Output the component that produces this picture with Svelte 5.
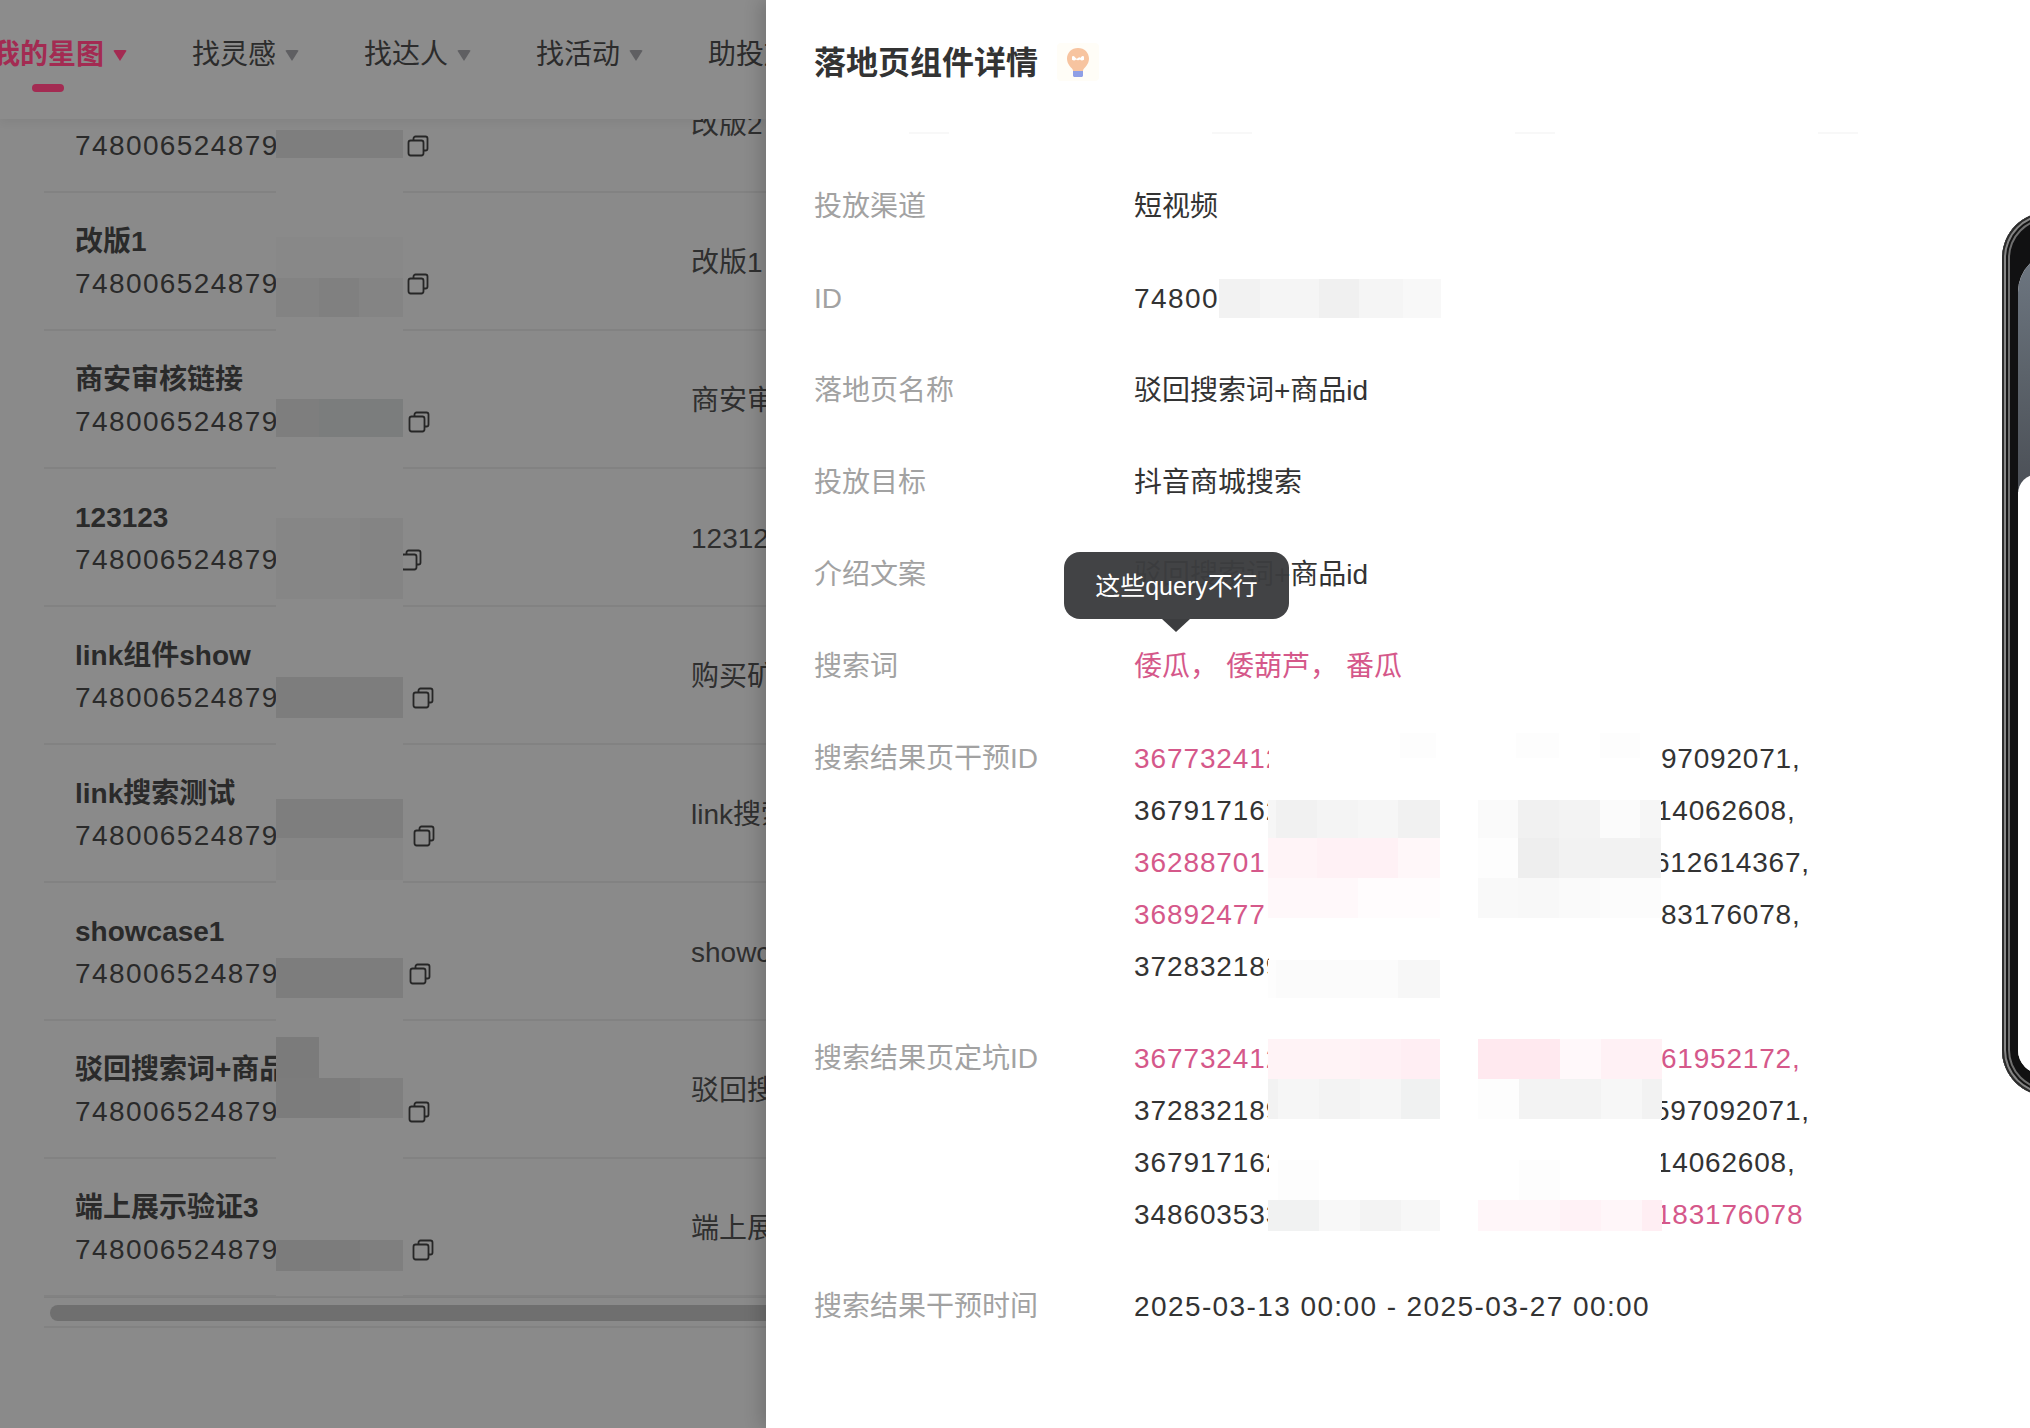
<script>
  const navItems = [
    { label: '我的星图', active: true },
    { label: '找灵感' },
    { label: '找达人' },
    { label: '找活动' },
    { label: '助投放' }
  ];

  // iconGap: the blurred part of the id has a different length on each row
  const rows = [
    { title: '改版2', note: '改版2', iconGap: 128 },
    { title: '改版1', note: '改版1', iconGap: 128 },
    { title: '商安审核链接', note: '商安审核链接', iconGap: 129 },
    { title: '123123', note: '123123', iconGap: 121 },
    { title: 'link组件show', note: '购买矿泉水', iconGap: 133 },
    { title: 'link搜索测试', note: 'link搜索测试', iconGap: 134 },
    { title: 'showcase1', note: 'showcase1', iconGap: 130 },
    { title: '驳回搜索词+商品id', note: '驳回搜索词', iconGap: 129 },
    { title: '端上展示验证3', note: '端上展示', iconGap: 133 }
  ];

  // x, y, w, h, colour
  const listBlur = [
    [276, 130, 127, 28, '#7e7e7e'],
    [276, 237, 127, 41, '#888888'],
    [276, 278, 43, 39, '#838383'],
    [319, 278, 40, 39, '#808080'],
    [359, 278, 44, 39, '#848484'],
    [276, 399, 43, 38, '#7e7e7e'],
    [319, 399, 84, 38, '#7b7d7d'],
    [276, 518, 84, 81, '#868686'],
    [360, 518, 43, 81, '#848484'],
    [276, 677, 127, 41, '#7d7d7d'],
    [276, 799, 127, 39, '#7e7e7e'],
    [276, 838, 127, 42, '#868686'],
    [276, 958, 127, 40, '#7d7d7d'],
    [276, 1037, 43, 41, '#7b7b7b'],
    [276, 1078, 84, 40, '#7c7c7c'],
    [360, 1078, 43, 40, '#7f7f7f'],
    [276, 1240, 84, 31, '#7c7c7c'],
    [360, 1240, 43, 31, '#7f7f7f']
  ];

  const detailBlur = [
    [1219, 279, 41, 39, '#f2f2f2'],
    [1260, 279, 59, 39, '#f5f5f5'],
    [1319, 279, 40, 39, '#f0f0f0'],
    [1359, 279, 44, 39, '#f5f5f5'],
    [1403, 279, 38, 39, '#f8f8f8'],

    [1400, 733, 36, 25, '#fdfdfd'],
    [1516, 733, 43, 25, '#fdfdfd'],
    [1600, 733, 40, 25, '#fdfdfd'],

    [1268, 800, 8, 38, '#f6f6f6'],
    [1276, 800, 41, 38, '#f1f1f1'],
    [1317, 800, 41, 38, '#f4f4f4'],
    [1358, 800, 40, 38, '#f6f6f6'],
    [1398, 800, 42, 38, '#f1f1f1'],
    [1478, 800, 40, 38, '#fafafa'],
    [1518, 800, 41, 38, '#f1f1f1'],
    [1559, 800, 41, 38, '#f3f3f3'],
    [1600, 800, 40, 38, '#fbfbfb'],
    [1640, 800, 21, 38, '#f6f6f6'],

    [1268, 838, 49, 40, '#fff4f7'],
    [1317, 838, 81, 40, '#fff1f5'],
    [1398, 838, 42, 40, '#fff7f9'],
    [1478, 838, 40, 40, '#fdfdfd'],
    [1518, 838, 41, 40, '#eeeeee'],
    [1559, 838, 102, 40, '#f2f2f2'],

    [1268, 878, 90, 40, '#fff8fa'],
    [1358, 878, 82, 40, '#fffcfd'],
    [1478, 878, 40, 40, '#f9f9f9'],
    [1518, 878, 41, 40, '#f8f8f8'],
    [1559, 878, 41, 40, '#fafafa'],
    [1600, 878, 61, 40, '#fcfcfc'],

    [1268, 960, 8, 38, '#fdfdfd'],
    [1276, 960, 122, 38, '#fbfbfb'],
    [1398, 960, 42, 38, '#f7f7f7'],

    [1268, 1039, 92, 40, '#fff3f6'],
    [1360, 1039, 41, 40, '#fff1f5'],
    [1401, 1039, 39, 40, '#ffeef3'],
    [1478, 1039, 82, 40, '#ffe9ef'],
    [1560, 1039, 41, 40, '#fff8fa'],
    [1601, 1039, 61, 40, '#fff1f5'],

    [1268, 1079, 10, 40, '#f2f2f2'],
    [1278, 1079, 41, 40, '#f6f6f6'],
    [1319, 1079, 41, 40, '#f3f3f3'],
    [1360, 1079, 41, 40, '#f6f6f6'],
    [1401, 1079, 39, 40, '#f0f1f1'],
    [1478, 1079, 41, 40, '#fdfdfd'],
    [1519, 1079, 82, 40, '#f3f3f3'],
    [1601, 1079, 41, 40, '#f7f7f7'],
    [1642, 1079, 20, 40, '#f2f2f2'],

    [1278, 1160, 41, 40, '#fdfdfd'],
    [1519, 1160, 41, 40, '#fdfdfd'],

    [1268, 1200, 51, 31, '#f1f2f2'],
    [1319, 1200, 41, 31, '#f8f8f8'],
    [1360, 1200, 41, 31, '#f3f3f3'],
    [1401, 1200, 39, 31, '#f7f7f7'],
    [1478, 1200, 82, 31, '#fff6f9'],
    [1560, 1200, 41, 31, '#fff2f6'],
    [1601, 1200, 41, 31, '#fff6f9'],
    [1642, 1200, 20, 31, '#ffeef3']
  ];

  const details = [
    { label: '投放渠道', value: '短视频' },
    { label: 'ID', value: '74800', num: true },
    { label: '落地页名称', value: '驳回搜索词+商品id' },
    { label: '投放目标', value: '抖音商城搜索' },
    { label: '介绍文案', value: '驳回搜索词+商品id' },
    { label: '搜索词', words: ['倭瓜，', '倭葫芦，', '番瓜'] },
    {
      label: '搜索结果页干预ID',
      ids: [
        { head: '367732412', tail: '97092071,', pink: true, cut: 0 },
        { head: '367917162', tail: '14062608,', cut: 5 },
        { head: '36288701', tail: '612614367,', pink: true, cut: 7 },
        { head: '36892477', tail: '83176078,', pink: true, cut: 0 },
        { head: '372832189', tail: '' }
      ]
    },
    {
      label: '搜索结果页定坑ID',
      ids: [
        { head: '367732412', tail: '61952172,', pink: true, tailPink: true, cut: 0 },
        { head: '372832189', tail: '597092071,', cut: 7 },
        { head: '367917162', tail: '14062608,', cut: 5 },
        { head: '348603533', tail: '183176078', tailPink: true, cut: 5 }
      ]
    },
    { label: '搜索结果干预时间', value: '2025-03-13 00:00 - 2025-03-27 00:00', num: true }
  ];

  const drawerLeft = 766;
</script>

<div class="page">
  <section class="list-side">
    <header class="topbar">
      <nav class="nav">
        {#each navItems as item}
          <div class="nav-item" class:active={item.active}>
            <span>{item.label}</span>
            <i class="caret"></i>
            {#if item.active}<b class="underline"></b>{/if}
          </div>
        {/each}
      </nav>
    </header>

    <div class="table">
      {#each rows as row}
        <div class="row">
          <div class="cell-main">
            <div class="row-title">{row.title}</div>
            <div class="row-id">
              <span class="digits">748006524879</span>
              <svg style="margin-left: {row.iconGap}px" class="copy" width="22" height="22" viewBox="0 0 22 22" fill="none" stroke="#262626" stroke-width="1.8">
                <rect x="1.5" y="5.500" width="15" height="15" rx="2.2" />
                <path d="M6.500 5.500V3.600c0-1.200.9-2.100 2.100-2.100h9.800c1.200 0 2.100.9 2.100 2.100v9.800c0 1.200-.9 2.100-2.100 2.100h-1.900" />
              </svg>
            </div>
          </div>
          <div class="cell-note">{row.note}</div>
        </div>
      {/each}
      <div class="scroller"><div class="thumb"></div></div>
    </div>

    <div class="blur-column"></div>
    {#each listBlur as [x, y, w, h, c]}
      <div class="blur" style="left:{x}px;top:{y}px;width:{w}px;height:{h}px;background:{c}"></div>
    {/each}
  </section>

  <aside class="drawer">
    <div class="drawer-head">
      <h2>落地页组件详情</h2>
      <svg class="bulb" width="42" height="38" viewBox="0 0 42 38">
        <rect width="42" height="38" rx="4" fill="#fffdf7" />
        <path d="M21 5c-6.500 0-11 4.800-11 10.500 0 4.500 2.500 7.300 4.500 9.500 1 1.100 1.500 2 1.500 3h10c0-1 .5-1.900 1.500-3 2-2.200 4.500-5 4.500-9.500C32 9.800 27.500 5 21 5z" fill="#f7c4a0" />
        <path d="M15 13.500c1.600-1.500 3 .4 3.700 1.600.6 1 1.300 1 2.300 0 1-1 1.700-1 2.300 0 .7-1.200 2.100-3.100 3.700-1.600v3.200c-1.800 1.300-3.100.8-4-.3-1 1-3 1-4 0-.9 1.100-2.200 1.600-4 .3z" fill="#fff" />
        <path d="M16 28h10v4.500c0 .8-.7 1.500-1.500 1.500h-7c-.8 0-1.500-.7-1.500-1.500z" fill="#8f9fe6" />
      </svg>
    </div>

    <div class="cut-row"><i></i><i></i><i></i><i></i></div>

    <div class="detail-list">
      {#each details as d}
        <div class="detail">
          <div class="detail-label">{d.label}</div>
          <div class="detail-value">
            {#if d.words}
              <div class="words">
                {#each d.words as w}<span>{w}</span>{/each}
              </div>
            {:else if d.ids}
              {#each d.ids as line}
                <div class="id-line digits">
                  <span class="head" class:pink={line.pink}>{line.head}</span>
                  <span class="tail" class:pink={line.tailPink}><span style="margin-left:-{line.cut || 0}px">{line.tail}</span></span>
                </div>
              {/each}
            {:else}
              <span class:digits={d.num}>{d.value}</span>
            {/if}
          </div>
        </div>
      {/each}
    </div>

    {#each detailBlur as [x, y, w, h, c]}
      <div class="blur" style="left:{x - drawerLeft}px;top:{y}px;width:{w}px;height:{h}px;background:{c}"></div>
    {/each}

    <div class="tooltip">这些query不行</div>

    <div class="phone">
      <div class="phone-screen">
        <div class="phone-top"></div>
        <div class="phone-sheet"></div>
      </div>
    </div>
  </aside>
</div>

<style>
  :global(body) {
    margin: 0;
    background: #8c8c8c;
    font-family: "Liberation Sans", "Noto Sans CJK SC", sans-serif;
    overflow: hidden;
  }

  .page {
    display: flex;
    width: 2030px;
    height: 1428px;
    overflow: hidden;
  }

  .list-side {
    position: relative;
    width: 766px;
    height: 1428px;
    flex: none;
    overflow: hidden;
    background: #8a8a8a;
  }

  .topbar {
    position: absolute;
    z-index: 3;
    left: 0;
    top: 0;
    width: 100%;
    height: 119px;
    background: #8c8c8c;
    box-shadow: 0 2px 10px rgba(0, 0, 0, 0.07);
  }

  .nav {
    display: flex;
    gap: 65px;
    margin-left: -8px;
    padding-top: 34px;
    white-space: nowrap;
  }

  .nav-item {
    position: relative;
    display: flex;
    align-items: center;
    font-size: 28px;
    line-height: 42px;
    color: #2c2c2c;
  }

  .nav-item.active {
    color: #a32b52;
    font-weight: 600;
  }

  .caret {
    width: 0;
    height: 0;
    margin-left: 9px;
    border-left: 7px solid transparent;
    border-right: 7px solid transparent;
    border-top: 11px solid #5f5f62;
    border-radius: 2px;
  }

  .active .caret {
    border-top-color: #a32b52;
  }

  .underline {
    position: absolute;
    left: 40px;
    top: 50px;
    width: 32px;
    height: 8px;
    border-radius: 4px;
    background: #a32b52;
  }

  .table {
    margin-left: 44px;
    padding-top: 55px;
  }

  .row {
    display: flex;
    height: 136px;
    border-bottom: 2px solid #828282;
    white-space: nowrap;
  }

  .cell-main {
    width: 647px;
    flex: none;
    padding: 27.5px 0 0 31px;
    box-sizing: border-box;
    font-size: 28px;
    line-height: 42px;
    color: #2a2a2a;
  }

  .row-title {
    font-weight: 600;
    width: 202px;
    overflow: hidden;
  }

  .row-id {
    display: flex;
    align-items: center;
  }

  .copy {
    flex: none;
  }

  .cell-note {
    align-self: center;
    padding-top: 3px;
    font-size: 28px;
    line-height: 42px;
    color: #2f2f2f;
  }

  .digits {
    letter-spacing: 1.4px;
  }

  .scroller {
    position: relative;
    height: 28px;
    border-top: 1px solid #808080;
    border-bottom: 2px solid #828282;
  }

  .thumb {
    position: absolute;
    left: 6px;
    right: 0;
    top: 7px;
    height: 16px;
    border-radius: 8px 0 0 8px;
    background: #6f6f6f;
  }

  .blur-column {
    position: absolute;
    z-index: 1;
    left: 276px;
    top: 119px;
    width: 127px;
    height: 1177px;
    background: #8a8a8a;
  }

  .blur {
    position: absolute;
    z-index: 2;
  }

  .drawer {
    position: relative;
    flex: 1;
    height: 1428px;
    overflow: hidden;
    background: #fff;
    box-shadow: -6px 0 16px rgba(0, 0, 0, 0.16);
    z-index: 5;
    color: #333;
  }

  .drawer-head {
    display: flex;
    align-items: center;
    height: 44px;
    padding: 41px 0 0 48px;
  }

  h2 {
    margin: 0;
    font-size: 32px;
    line-height: 44px;
    font-weight: 600;
    color: #333;
  }

  .bulb {
    margin-left: 19px;
    margin-top: -2px;
  }

  .cut-row {
    display: flex;
    gap: 263px;
    margin: 47px 0 0 143px;
  }

  .cut-row i {
    width: 40px;
    height: 2px;
    background: #f8f8f8;
  }

  .detail-list {
    display: flex;
    flex-direction: column;
    gap: 40px;
    margin: 47px 0 0 48px;
    font-size: 28px;
    line-height: 52px;
    white-space: nowrap;
  }

  .detail {
    display: flex;
  }

  .detail-label {
    width: 320px;
    flex: none;
    color: #a2a2a2;
  }

  .words {
    display: flex;
    gap: 8px;
    color: #d5588a;
  }

  .id-line {
    display: flex;
    height: 52px;
  }

  .head {
    width: 135px;
    flex: none;
    overflow: hidden;
    letter-spacing: 0.9px;
  }

  .tail {
    margin-left: 392px;
    overflow: hidden;
    letter-spacing: 0.8px;
  }

  .tail span {
    display: inline-block;
  }

  .pink {
    color: #d5588a;
  }

  .tooltip {
    position: absolute;
    z-index: 4;
    left: 298px;
    top: 552px;
    width: 225px;
    height: 67px;
    border-radius: 16px;
    background: rgba(60, 61, 63, 0.97);
    color: #fff;
    font-size: 25px;
    line-height: 69px;
    text-align: center;
  }

  .tooltip::after {
    content: '';
    position: absolute;
    left: 98px;
    top: 67px;
    border-left: 14px solid transparent;
    border-right: 14px solid transparent;
    border-top: 13px solid #3c3d3f;
  }

  .phone {
    position: absolute;
    left: 1236px;
    top: 212px;
    width: 300px;
    height: 884px;
    padding: 40px 16px 22px;
    box-sizing: border-box;
    border-radius: 46px 46px 46px 46px;
    background: #111112;
    box-shadow: inset 0 0 0 2px #2c2c2c, inset 0 0 0 4px #858585, inset 0 0 0 6px #151515, inset 0 0 0 8px #6f6f6f;
  }

  .phone-screen {
    display: flex;
    flex-direction: column;
    height: 100%;
    border-radius: 40px 40px 24px 24px;
    overflow: hidden;
    background: #fff;
  }

  .phone-top {
    height: 240px;
    flex: none;
    background: linear-gradient(180deg, #6e7782 0%, #5c636b 50%, #4b4f56 100%);
  }

  .phone-sheet {
    flex: 1;
    margin-top: -18px;
    border-radius: 20px 0 0 0;
    background: #fff;
  }
</style>
